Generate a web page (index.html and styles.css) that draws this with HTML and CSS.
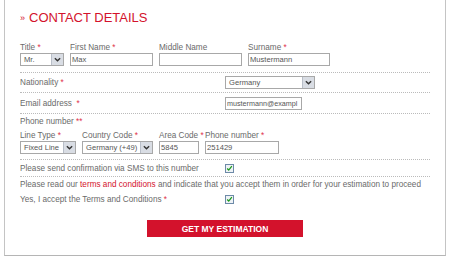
FILE: index.html
```html
<!DOCTYPE html>
<html lang="en">
<head>
  <meta charset="UTF-8">
  <title>Contact Details</title>
  <link rel="stylesheet" href="styles.css">
</head>
<body>

  <div class="card">
    <h1 class="heading"><span class="raquo">&raquo;</span>CONTACT DETAILS</h1>

    <div class="row names">
      <div class="field">
        <label>Title <em>*</em></label>
        <div class="select w-title"><span>Mr.</span><i class="arrow"><svg viewBox="0 0 8 8" width="7" height="7"><path d="M1 2.5 L4 5.5 L7 2.5" fill="none" stroke="#333" stroke-width="1.6"/></svg></i></div>
      </div>
      <div class="field">
        <label>First Name <em>*</em></label>
        <input class="w-name" type="text" value="Max">
      </div>
      <div class="field">
        <label>Middle Name</label>
        <input class="w-name" type="text" value="">
      </div>
      <div class="field">
        <label>Surname <em>*</em></label>
        <input class="w-sur" type="text" value="Mustermann">
      </div>
    </div>

    <div class="row line">
      <span class="text">Nationality <em>*</em></span>
      <div class="select w-nation"><span>Germany</span><i class="arrow"><svg viewBox="0 0 8 8" width="7" height="7"><path d="M1 2.5 L4 5.5 L7 2.5" fill="none" stroke="#333" stroke-width="1.6"/></svg></i></div>
    </div>

    <div class="row line email">
      <span class="text">Email address &nbsp;<em>*</em></span>
      <input class="w-email" type="text" value="mustermann@exampl">
    </div>

    <div class="row phone">
      <div class="text">Phone number <em>**</em></div>
      <div class="phone-fields">
        <div class="field">
          <label>Line Type <em>*</em></label>
          <div class="select w-line"><span>Fixed Line</span><i class="arrow"><svg viewBox="0 0 8 8" width="7" height="7"><path d="M1 2.5 L4 5.5 L7 2.5" fill="none" stroke="#333" stroke-width="1.6"/></svg></i></div>
        </div>
        <div class="field">
          <label>Country Code <em>*</em></label>
          <div class="select w-country"><span>Germany (+49)</span><i class="arrow"><svg viewBox="0 0 8 8" width="7" height="7"><path d="M1 2.5 L4 5.5 L7 2.5" fill="none" stroke="#333" stroke-width="1.6"/></svg></i></div>
        </div>
        <div class="field">
          <label>Area Code <em>*</em></label>
          <input class="w-area" type="text" value="5845">
        </div>
        <div class="field">
          <label>Phone number <em>*</em></label>
          <input class="w-phone" type="text" value="251429">
        </div>
      </div>
    </div>

    <div class="row line sms">
      <span class="text">Please send confirmation via SMS to this number</span>
      <span class="check"><svg viewBox="0 0 9 9" width="7" height="7"><path d="M1.5 4.5 L3.5 6.5 L7.5 1.5" fill="none" stroke="#1c9a1c" stroke-width="1.6"/></svg></span>
    </div>

    <div class="row terms">
      <p class="text">Please read our <a href="#">terms and conditions</a> and indicate that you accept them in order for your estimation to proceed</p>
      <div class="line accept">
        <span class="text">Yes, I accept the Terms and Conditions <em>*</em></span>
        <span class="check"><svg viewBox="0 0 9 9" width="7" height="7"><path d="M1.5 4.5 L3.5 6.5 L7.5 1.5" fill="none" stroke="#1c9a1c" stroke-width="1.6"/></svg></span>
      </div>
    </div>

    <div class="actions">
      <button class="submit">GET MY ESTIMATION</button>
    </div>
  </div>

</body>
</html>
```

FILE: styles.css
```css
body {
  margin: 0;
  background: #fff;
  font-family: 'Liberation Sans', Arial, sans-serif;
  font-size: 8.2px;
  color: #6a6a6a;
}

.card {
  margin-left: 4px;
  width: 410px;
  height: 255px;
  padding: 0 15px;
  border-left: 1px solid #c4c4c4;
  border-right: 1px solid #c4c4c4;
  border-bottom: 1px solid #b5b5b5;
}

.heading {
  margin: 0;
  padding-top: 11px;
  height: 34px;
  box-sizing: border-box;
  font-size: 13px;
  font-weight: normal;
  color: #d3122c;
  line-height: 14px;
}

.raquo {
  font-size: 9px;
  margin-right: 4px;
  vertical-align: 1px;
}

em {
  font-style: normal;
  color: #e0334b;
}

.row {
  border-bottom: 1px dotted #bbb;
}

.names {
  display: flex;
  gap: 6px;
  padding: 9px 0 6px;
}

.field {
  display: flex;
  flex-direction: column;
}

.field label {
  white-space: nowrap;
  line-height: 9px;
  margin-bottom: 1px;
}

input {
  box-sizing: border-box;
  height: 13px;
  padding: 0 1px;
  border: 1px solid #a8a8a8;
  font-family: inherit;
  font-size: 7.6px;
  color: #555;
  background: #fff;
}

.select {
  box-sizing: border-box;
  height: 13px;
  border: 1px solid #a8a8a8;
  display: flex;
  align-items: center;
  justify-content: space-between;
  padding-left: 3px;
  font-size: 7.6px;
  color: #555;
  background: #fff;
  white-space: nowrap;
  overflow: hidden;
}

.arrow {
  flex: none;
  width: 11px;
  height: 11px;
  background: #d9dde4;
  border-left: 1px solid #b8bec8;
  display: flex;
  align-items: center;
  justify-content: center;
}

.w-title { width: 44px; }
.w-name { width: 83px; }
.w-sur { width: 82px; }
.w-nation { width: 90px; }
.w-email { width: 77px; font-size: 7.2px; }
.w-line { width: 56px; }
.w-country { width: 71px; }
.w-area { width: 40px; }
.w-phone { width: 74px; }

.line {
  display: grid;
  grid-template-columns: 205px 1fr;
  align-items: center;
  min-height: 19px;
}

.email {
  min-height: 20px;
}

.phone {
  padding: 3px 0 5px;
}

.phone .text {
  line-height: 9px;
  margin-bottom: 5px;
}

.phone-fields {
  display: grid;
  grid-template-columns: 56px 71px 40px 74px;
  column-gap: 6px;
}

.sms {
  min-height: 16px;
}

.check {
  box-sizing: border-box;
  width: 9px;
  height: 9px;
  border: 1px solid #6d8aa8;
  background: #eef2f6;
  display: flex;
  align-items: center;
  justify-content: center;
}

.terms {
  border-bottom: none;
  padding-top: 3px;
}

.terms p {
  margin: 0;
  line-height: 10px;
  white-space: nowrap;
}

.terms a {
  color: #d3122c;
  text-decoration: none;
}

.accept {
  min-height: 18px;
}

.actions {
  display: flex;
  justify-content: center;
  padding-top: 12px;
}

.submit {
  width: 156px;
  height: 17px;
  border: none;
  background: #d3122c;
  color: #fff;
  font-family: inherit;
  font-weight: bold;
  font-size: 8.5px;
  cursor: pointer;
}
```
